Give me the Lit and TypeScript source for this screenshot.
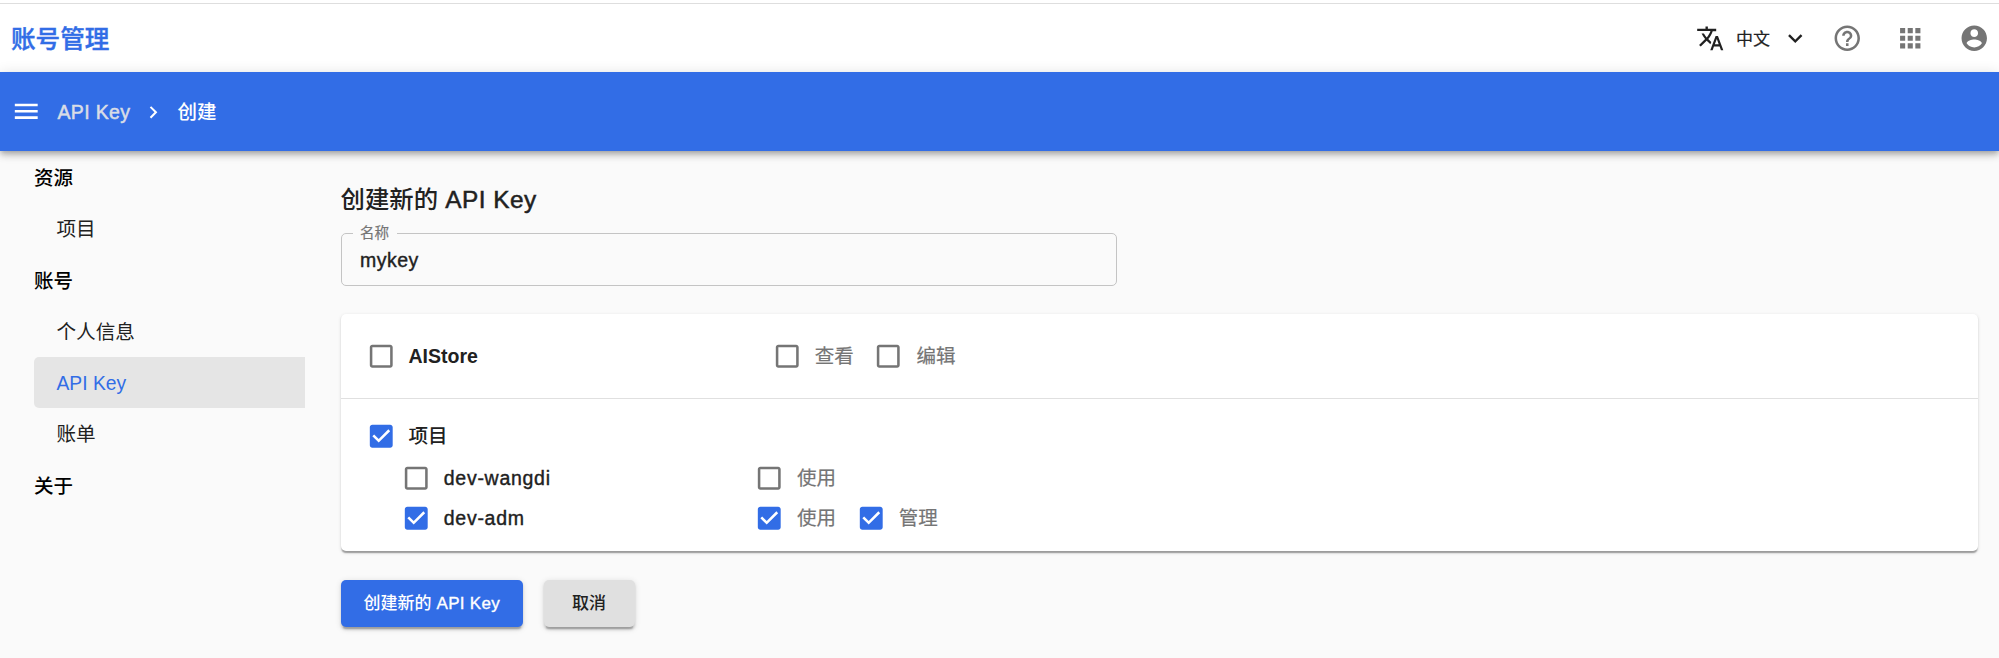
import { LitElement, html, css, svg } from "lit";
import { customElement, property } from "lit/decorators.js";
import { classMap } from "lit/directives/class-map.js";

const ICONS: Record<string, string> = {
  translate:
    "M12.87 15.07l-2.54-2.51.03-.03c1.74-1.94 2.98-4.17 3.71-6.53H17V4h-7V2H8v2H1v1.99h11.17C11.5 7.92 10.44 9.75 9 11.35 8.07 10.32 7.3 9.19 6.69 8h-2c.73 1.63 1.73 3.17 2.98 4.56l-5.09 5.02L4 19l5-5 3.11 3.11.76-2.04zM18.5 10h-2L12 22h2l1.12-3h4.75L21 22h2l-4.5-12zm-2.62 7l1.62-4.33L19.12 17h-3.24z",
  expand: "M16.59 8.59L12 13.17 7.41 8.59 6 10l6 6 6-6z",
  next: "M10 6L8.59 7.41 13.17 12l-4.58 4.59L10 18l6-6z",
  menu: "M3 18h18v-2H3v2zm0-5h18v-2H3v2zm0-7v2h18V6H3z",
  help: "M11 18h2v-2h-2v2zm1-16C6.48 2 2 6.48 2 12s4.48 10 10 10 10-4.48 10-10S17.52 2 12 2zm0 18c-4.41 0-8-3.59-8-8s3.59-8 8-8 8 3.59 8 8-3.59 8-8 8zm0-14c-2.21 0-4 1.79-4 4h2c0-1.1.9-2 2-2s2 .9 2 2c0 2-3 1.75-3 5h2c0-2.25 3-2.5 3-5 0-2.21-1.79-4-4-4z",
  apps: "M4 8h4V4H4v4zm6 12h4v-4h-4v4zm-6 0h4v-4H4v4zm0-6h4v-4H4v4zm6 0h4v-4h-4v4zm6-10v4h4V4h-4zm-6 4h4V4h-4v4zm6 6h4v-4h-4v4zm0 6h4v-4h-4v4z",
  account:
    "M12 2C6.48 2 2 6.48 2 12s4.48 10 10 10 10-4.48 10-10S17.52 2 12 2zm0 3c1.66 0 3 1.34 3 3s-1.34 3-3 3-3-1.34-3-3 1.34-3 3-3zm0 14.2c-2.5 0-4.71-1.28-6-3.22.03-1.99 4-3.08 6-3.08 1.99 0 5.97 1.09 6 3.08-1.29 1.94-3.5 3.22-6 3.22z",
  unchecked:
    "M19 5v14H5V5h14m0-2H5c-1.1 0-2 .9-2 2v14c0 1.1.9 2 2 2h14c1.1 0 2-.9 2-2V5c0-1.1-.9-2-2-2z",
  checked:
    "M19 3H5c-1.11 0-2 .9-2 2v14c0 1.1.89 2 2 2h14c1.11 0 2-.9 2-2V5c0-1.1-.89-2-2-2zm-9 14l-5-5 1.41-1.41L10 14.17l7.59-7.59L19 8l-9 9z",
};

const icon = (name: string, cls = "") =>
  html`<svg class="icon ${cls}" viewBox="0 0 24 24" aria-hidden="true">${svg`<path d=${ICONS[name]} />`}</svg>`;

const iconStyles = css`
  .icon {
    width: 30.5px;
    height: 30.5px;
    flex: none;
    display: block;
    fill: currentColor;
  }
`;

@customElement("check-item")
class CheckItem extends LitElement {
  @property({ type: Boolean }) checked = false;
  @property() label = "";
  @property() tone = "muted";

  static styles = [
    iconStyles,
    css`
      :host { display: block; }
      .item { display: flex; align-items: center; gap: 12.5px; height: 30px; }
      .box { color: #757575; }
      .box.on { color: #326de6; }
      .label { white-space: nowrap; line-height: 30px; font-size: 19.5px; }
      .muted { color: #757575; width: 39px; -webkit-text-stroke: 0.2px; }
      .medium { font-weight: 500; -webkit-text-stroke: 0.4px; letter-spacing: 0.72px; }
      .strong { font-weight: 700; letter-spacing: 0; }
      .group { font-weight: 500; }
    `,
  ];

  render() {
    return html`<div class="item">
      <span class=${classMap({ box: true, on: this.checked })}>${icon(this.checked ? "checked" : "unchecked")}</span>
      <span class="label ${this.tone}">${this.label}</span>
    </div>`;
  }
}

@customElement("app-root")
class AppRoot extends LitElement {
  static styles = [
    iconStyles,
    css`
      :host {
        display: block;
        height: 658px;
        overflow: hidden;
        background: #fafafa;
        color: #212121;
        font-family: "Liberation Sans", "Noto Sans CJK SC", sans-serif;
        font-size: 19.5px;
      }
      * { box-sizing: border-box; }
      .top {
        height: 72px;
        padding: 4px 10px 0 11px;
        background: linear-gradient(#fff 3px, #dedede 3px, #dedede 4px, #fff 4px);
        display: flex;
        align-items: center;
      }
      .brand { flex: 1; color: #326de6; font-size: 24.6px; font-weight: 500; margin-top: -2px; -webkit-text-stroke: 0.4px; }
      .lang { display: flex; align-items: center; font-size: 17px; margin-right: 22px; }
      .lang .icon { width: 28.5px; height: 28.5px; }
      .lang-name { margin: -2px 11px 0 12px; -webkit-text-stroke: 0.2px; }
      .tools { display: flex; gap: 33px; color: #757575; }
      .bar {
        position: relative;
        height: 79px;
        padding-left: 11px;
        background: #326de6;
        color: #fff;
        display: flex;
        align-items: center;
        font-weight: 500;
        box-shadow: 0 2.5px 5px -1px rgba(0, 0, 0, 0.2), 0 5px 6.4px rgba(0, 0, 0, 0.14), 0 1px 12.7px rgba(0, 0, 0, 0.12);
      }
      .crumb { margin: 1px 11px 0 16px; color: #d9dde6; -webkit-text-stroke: 0.5px; letter-spacing: 0.35px; }
      .bar .sep { width: 24.5px; height: 24.5px; margin-top: 1px; }
      .here { margin: -2px 0 0 11.5px; }
      .body { display: flex; align-items: flex-start; }
      .side { width: 305px; padding: 1px 0 0 34px; margin-right: 35.5px; }
      .nav { height: 51.3px; line-height: 53.3px; padding-left: 22.5px; color: #212121; font-size: 19.6px; }
      .nav.head { padding-left: 0; font-weight: 500; color: #000; font-size: 19.5px; }
      .nav.active { background: #e5e5e5; color: #326de6; border-radius: 5px 0 0 5px; font-size: 19.3px; }
      .main { width: 1637.5px; padding-top: 32px; }
      .title { margin: 0; height: 33px; line-height: 33px; font-size: 24.4px; font-weight: 500; }
      .title .latin { -webkit-text-stroke: 0.5px; letter-spacing: 0.45px; }
      .field {
        margin: 10px 0 28.5px;
        padding: 0 0 0 11px;
        width: 776.5px;
        height: 59.5px;
        min-width: 0;
        border: 1.3px solid #c4c4c4;
        border-radius: 5px;
      }
      .legend { padding: 0 7.5px; height: 15px; line-height: 15px; font-size: 14.5px; color: #757575; -webkit-text-stroke: 0.2px; }
      .value { padding-left: 7.5px; line-height: 39px; -webkit-text-stroke: 0.4px; letter-spacing: 0.5px; }
      .card {
        height: 237px;
        background: #fff;
        border-radius: 5px;
        box-shadow: 0 2.5px 1.3px -1.3px rgba(0, 0, 0, 0.2), 0 1.3px 1.3px rgba(0, 0, 0, 0.14), 0 1.3px 3.8px rgba(0, 0, 0, 0.12);
      }
      .group-box { padding: 27px 0 0 25px; height: 84.5px; border-bottom: 1.3px solid #e0e0e0; }
      .group-box.last { height: auto; border: 0; padding-top: 22.5px; }
      .row { display: grid; grid-template-columns: 406.3px 1fr; height: 30px; }
      .row.child { padding-left: 35.3px; grid-template-columns: 353.2px 1fr; margin-top: 12.3px; }
      .row.child + .row.child { margin-top: 9.7px; }
      .perms { display: flex; gap: 19.7px; }
      .actions { display: flex; gap: 20.5px; margin-top: 28.5px; }
      .btn {
        height: 47.5px;
        border: 0;
        border-radius: 5px;
        padding: 0;
        font: 500 17px/47.5px "Liberation Sans", "Noto Sans CJK SC", sans-serif;
        text-align: center;
        box-shadow: 0 3.8px 1.3px -2.5px rgba(0, 0, 0, 0.2), 0 2.5px 2.5px rgba(0, 0, 0, 0.14), 0 1.3px 6.3px rgba(0, 0, 0, 0.12);
      }
      .primary { width: 182.5px; background: #326de6; color: #fff; }
      .primary .latin { -webkit-text-stroke: 0.35px; letter-spacing: 0.3px; }
      .plain { width: 91px; background: #e0e0e0; color: #212121; }
    `,
  ];

  nav = [
    { text: "资源", head: true },
    { text: "项目" },
    { text: "账号", head: true },
    { text: "个人信息" },
    { text: "API Key", active: true },
    { text: "账单" },
    { text: "关于", head: true },
  ];

  row(label: string, tone: string, on: boolean, perms: [string, boolean][], child = false) {
    return html`<div class=${classMap({ row: true, child })}>
      <check-item label=${label} tone=${tone} ?checked=${on}></check-item>
      <div class="perms">
        ${perms.map(([name, set]) => html`<check-item label=${name} ?checked=${set}></check-item>`)}
      </div>
    </div>`;
  }

  render() {
    return html`
      <header class="top">
        <div class="brand">账号管理</div>
        <div class="lang">${icon("translate")}<span class="lang-name">中文</span>${icon("expand")}</div>
        <div class="tools">${icon("help")}${icon("apps")}${icon("account")}</div>
      </header>
      <nav class="bar">
        ${icon("menu")}<span class="crumb">API Key</span>${icon("next", "sep")}<span class="here">创建</span>
      </nav>
      <div class="body">
        <aside class="side">
          ${this.nav.map(
            (n) => html`<div class=${classMap({ nav: true, head: !!n.head, active: !!n.active })}>${n.text}</div>`
          )}
        </aside>
        <main class="main">
          <h1 class="title">创建新的<span class="latin"> API Key</span></h1>
          <fieldset class="field">
            <legend class="legend">名称</legend>
            <div class="value">mykey</div>
          </fieldset>
          <section class="card">
            <div class="group-box">
              ${this.row("AIStore", "strong", false, [["查看", false], ["编辑", false]])}
            </div>
            <div class="group-box last">
              ${this.row("项目", "group", true, [])}
              ${this.row("dev-wangdi", "medium", false, [["使用", false]], true)}
              ${this.row("dev-adm", "medium", true, [["使用", true], ["管理", true]], true)}
            </div>
          </section>
          <div class="actions">
            <button class="btn primary">创建新的<span class="latin"> API Key</span></button>
            <button class="btn plain">取消</button>
          </div>
        </main>
      </div>
    `;
  }
}
